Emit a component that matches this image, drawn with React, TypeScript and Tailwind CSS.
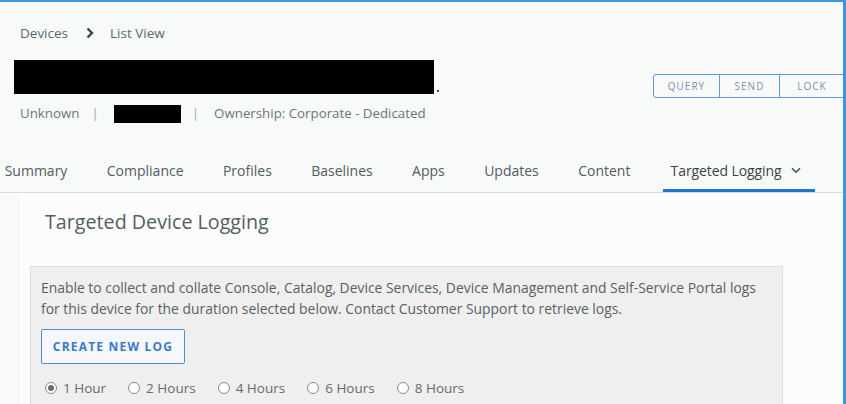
import React from "react";

const tabs = ["Summary", "Compliance", "Profiles", "Baselines", "Apps", "Updates", "Content"];
const hours = ["1 Hour", "2 Hours", "4 Hours", "6 Hours", "8 Hours"];

export default function App() {
  return (
    <div className="w-[846px] h-[404px] overflow-hidden bg-[#f8fafa] border-t-2 border-r-[3px] border-[#3d93e6] font-['Open_Sans',sans-serif]">
      {/* Header */}
      <div className="flex items-start">
        <div className="flex flex-col pt-[22px]">
          <div className="flex items-center h-[18px] pl-[20px] text-[13.5px] text-[#5d6670]">
            <span>Devices</span>
            <svg className="ml-[17px] mr-[15px]" width="10" height="12" viewBox="0 0 10 12">
              <path d="M2.5 1.5 L7 6 L2.5 10.5" fill="none" stroke="#3b4248" strokeWidth="2.4" />
            </svg>
            <span>List View</span>
          </div>
          <div className="flex items-end mt-[18px] pl-[14px]">
            <div className="w-[420px] h-[34px] bg-black" />
            <span className="ml-[3px] mb-[2px] w-[2px] h-[2px] bg-[#555]" />
          </div>
          <div className="flex items-center h-[18px] mt-[11px] pl-[20px] text-[13.3px] text-[#6b747c]">
            <span>Unknown</span>
            <span className="ml-[12px] text-[#a0a6ab]">|</span>
            <div className="ml-[15px] w-[67px] h-[18px] bg-black" />
            <span className="ml-[11px] text-[#a0a6ab]">|</span>
            <span className="ml-[15px]">Ownership: Corporate - Dedicated</span>
          </div>
        </div>
        <div className="ml-auto mr-[-2px] mt-[72px] flex h-[24px] border border-[#5b9be0] rounded-[3px] text-[10px] tracking-[1px] text-[#7f90a8]">
          <div className="w-[66px] flex items-center justify-center border-r border-[#5b9be0]">QUERY</div>
          <div className="w-[60px] flex items-center justify-center border-r border-[#5b9be0]">SEND</div>
          <div className="w-[64px] flex items-center justify-center">LOCK</div>
        </div>
      </div>

      {/* Tabs */}
      <div className="mt-[25px] h-[45px] border-b border-[#d8dde0] flex items-stretch">
        <div className="flex items-stretch ml-[-15px]">
          {tabs.map((t) => (
            <div key={t} className="mx-[11.7px] px-[8px] flex items-center text-[14px] text-[#555b60]">
              {t}
            </div>
          ))}
          <div className="mx-[11.7px] ml-[12.5px] pl-[8px] pr-[14px] flex items-center text-[14px] tracking-[-0.1px] text-[#3c4348] border-b-[3px] border-[#1f76d2] pt-[3px]">
            <span>Targeted Logging</span>
            <svg className="ml-[10px]" width="10" height="7" viewBox="0 0 10 7">
              <path d="M1 1.2 L5 5.2 L9 1.2" fill="none" stroke="#4a5056" strokeWidth="1.6" />
            </svg>
          </div>
        </div>
      </div>

      {/* Content */}
      <div className="flex h-full">
        <div className="w-[20px] bg-[#f8fafa]" />
        <div className="flex-1 bg-[#fcfcfc] pt-[15px]">
          <div className="pl-[25px] text-[19.7px] leading-[28px] text-[#555d64]">Targeted Device Logging</div>
          <div className="mt-[30px] ml-[10px] w-[753px] bg-[#efefef] border border-[#dcdcdc] pl-[10px] pt-[10px] pb-[20px]">
            <p className="text-[13.9px] leading-[21px] text-[#5a5f63]">
              Enable to collect and collate Console, Catalog, Device Services, Device Management and Self-Service Portal logs
              <br />
              for this device for the duration selected below. Contact Customer Support to retrieve logs.
            </p>
            <button className="mt-[10px] h-[35px] w-[144px] border border-[#4a8fd8] rounded-[2px] bg-[#f5f7fa] text-[12px] font-bold tracking-[1.2px] text-[#3b7bc8]">
              CREATE NEW LOG
            </button>
            <div className="mt-[14px] flex items-center h-[20px] pl-[4px] text-[13.5px] text-[#666b70]">
              {hours.map((h, i) => (
                <div key={h} className={`flex items-center ${i === 0 ? "" : "ml-[22px]"}`}>
                  <span className="w-[12px] h-[12px] rounded-full border border-[#8a8a8a] bg-white flex items-center justify-center">
                    {i === 0 && <span className="w-[6px] h-[6px] rounded-full bg-[#6a6a6a]" />}
                  </span>
                  <span className="ml-[6px]">{h}</span>
                </div>
              ))}
            </div>
          </div>
        </div>
      </div>
    </div>
  );
}
